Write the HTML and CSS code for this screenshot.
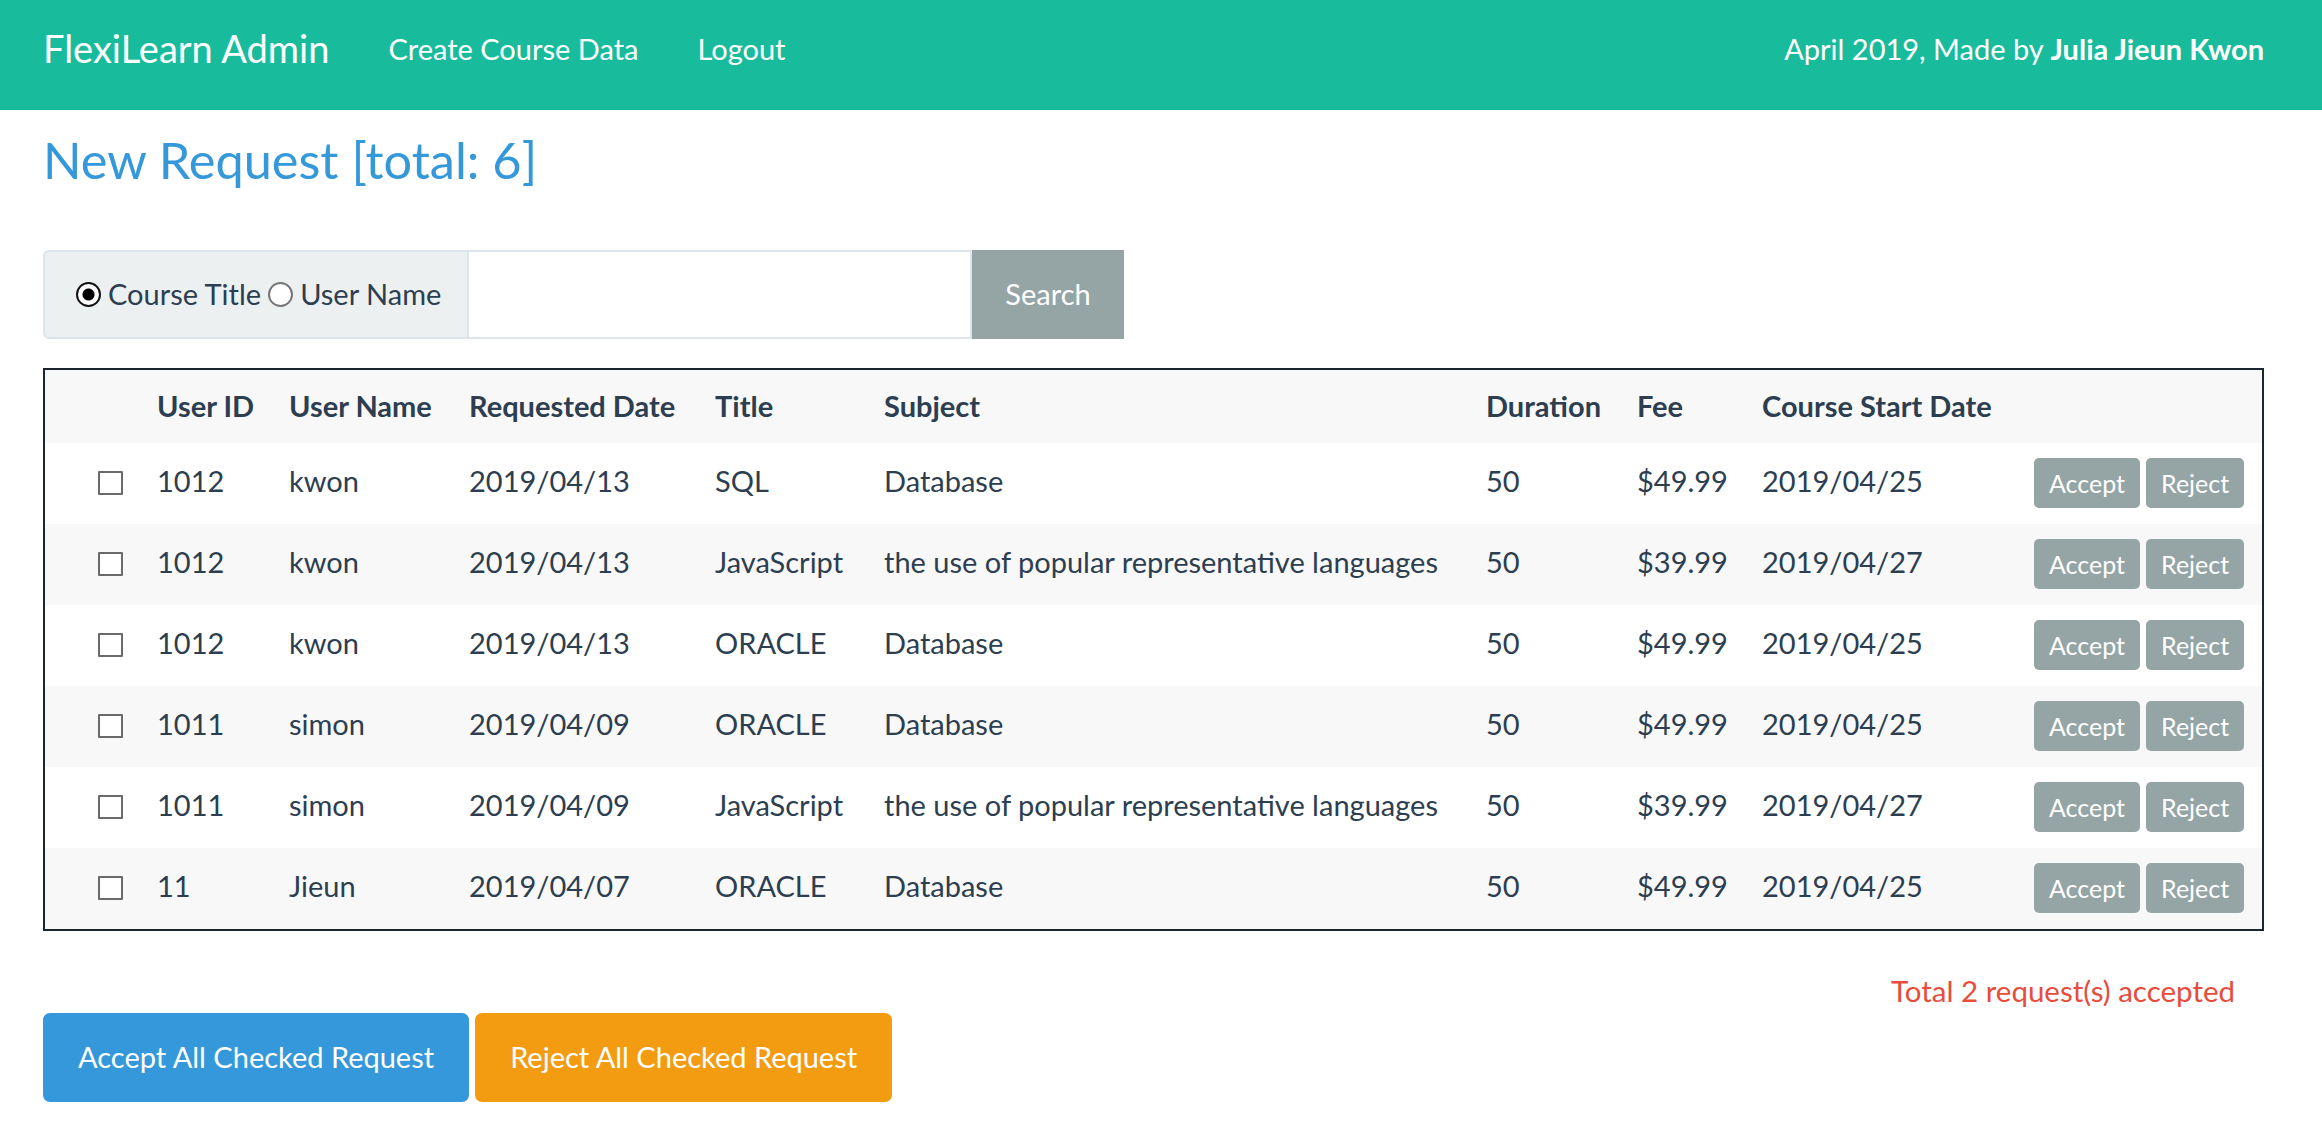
FILE: index.html
```html
<!DOCTYPE html>
<html lang="en">
<head>
<meta charset="utf-8">
<title>FlexiLearn Admin</title>
<link rel="stylesheet" href="styles.css">
</head>
<body>
<nav class="navbar">
  <a class="brand" href="#">FlexiLearn Admin</a>
  <a class="nav-link" href="#">Create Course Data</a>
  <a class="nav-link" href="#">Logout</a>
  <span class="nav-text">April 2019, Made by <b>Julia Jieun Kwon</b></span>
</nav>
<main class="page">
  <h3 class="title">New Request [total: 6]</h3>
  <form class="search-group">
    <div class="radio-box">
      <input type="radio" name="by" class="radio" checked><span class="radio-label">Course Title</span>
      <input type="radio" name="by" class="radio"><span class="radio-label">User Name</span>
    </div>
    <input type="text" class="search-input">
    <button type="button" class="search-btn">Search</button>
  </form>

  <table class="req-table">
    <colgroup>
      <col class="c0"><col class="c1"><col class="c2"><col class="c3"><col class="c4">
      <col class="c5"><col class="c6"><col class="c7"><col class="c8"><col class="c9">
    </colgroup>
    <tbody>
      <tr class="head-row">
        <th></th><th>User ID</th><th>User Name</th><th>Requested Date</th><th>Title</th>
        <th>Subject</th><th>Duration</th><th>Fee</th><th>Course Start Date</th><th></th>
      </tr>
      <tr>
        <td class="chk"><input type="checkbox" class="box"></td><td>1012</td><td>kwon</td><td>2019/04/13</td><td>SQL</td>
        <td>Database</td><td>50</td><td>$49.99</td><td>2019/04/25</td>
        <td class="acts"><button class="sm-btn">Accept</button><button class="sm-btn">Reject</button></td>
      </tr>
      <tr>
        <td class="chk"><input type="checkbox" class="box"></td><td>1012</td><td>kwon</td><td>2019/04/13</td><td>JavaScript</td>
        <td>the use of popular representative languages</td><td>50</td><td>$39.99</td><td>2019/04/27</td>
        <td class="acts"><button class="sm-btn">Accept</button><button class="sm-btn">Reject</button></td>
      </tr>
      <tr>
        <td class="chk"><input type="checkbox" class="box"></td><td>1012</td><td>kwon</td><td>2019/04/13</td><td>ORACLE</td>
        <td>Database</td><td>50</td><td>$49.99</td><td>2019/04/25</td>
        <td class="acts"><button class="sm-btn">Accept</button><button class="sm-btn">Reject</button></td>
      </tr>
      <tr>
        <td class="chk"><input type="checkbox" class="box"></td><td>1011</td><td>simon</td><td>2019/04/09</td><td>ORACLE</td>
        <td>Database</td><td>50</td><td>$49.99</td><td>2019/04/25</td>
        <td class="acts"><button class="sm-btn">Accept</button><button class="sm-btn">Reject</button></td>
      </tr>
      <tr>
        <td class="chk"><input type="checkbox" class="box"></td><td>1011</td><td>simon</td><td>2019/04/09</td><td>JavaScript</td>
        <td>the use of popular representative languages</td><td>50</td><td>$39.99</td><td>2019/04/27</td>
        <td class="acts"><button class="sm-btn">Accept</button><button class="sm-btn">Reject</button></td>
      </tr>
      <tr>
        <td class="chk"><input type="checkbox" class="box"></td><td>11</td><td>Jieun</td><td>2019/04/07</td><td>ORACLE</td>
        <td>Database</td><td>50</td><td>$49.99</td><td>2019/04/25</td>
        <td class="acts"><button class="sm-btn">Accept</button><button class="sm-btn">Reject</button></td>
      </tr>
    </tbody>
  </table>

  <p class="msg">Total 2 request(s) accepted</p>

  <div class="bulk">
    <button type="button" class="big-btn accept-all">Accept All Checked Request</button>
    <button type="button" class="big-btn reject-all">Reject All Checked Request</button>
  </div>
</main>
</body>
</html>
```

FILE: styles.css
```css
html, body {
  margin: 0;
  padding: 0;
  background: #ffffff;
}
body {
  font-family: Lato, "Open Sans", "Liberation Sans", sans-serif;
  font-size: 29px;
  line-height: 1.5;
  color: #2c3e50;
}

/* navbar */
.navbar {
  height: 110px;
  box-sizing: border-box;
  padding: 0 58px 12px 43px;
  background: #18bc9c;
  display: flex;
  align-items: center;
}
.navbar a {
  color: #ffffff;
  text-decoration: none;
}
.brand {
  font-size: 38px;
  line-height: 1.2;
  margin-right: 59px;
}
.nav-link {
  font-size: 29px;
  line-height: 1.2;
  margin-right: 59px;
}
.nav-text {
  margin-left: auto;
  color: #ffffff;
  font-size: 29px;
  line-height: 1.2;
}
.nav-text b {
  font-weight: 700;
}

/* page */
.page {
  padding: 0 58px 0 43px;
}
.title {
  margin: 20px 0 0 0;
  font-size: 50.5px;
  font-weight: 400;
  line-height: 1.2;
  color: #3498db;
}

/* search group */
.search-group {
  margin-top: 59px;
  display: flex;
  height: 89px;
}
.radio-box {
  box-sizing: border-box;
  height: 89px;
  width: 426px;
  display: flex;
  align-items: center;
  padding: 0 0 0 31px;
  background: #ecf0f1;
  border: 2px solid #dce4ec;
  border-radius: 6px 0 0 6px;
  color: #2c3e50;
}
.radio {
  appearance: none;
  -webkit-appearance: none;
  width: 25px;
  height: 25px;
  margin: 0 7px 0 0;
  box-sizing: border-box;
  border: 2px solid #767676;
  border-radius: 50%;
  background: #ffffff;
  flex: none;
}
.radio:checked {
  border: 2.5px solid #111111;
  background: radial-gradient(circle, #000000 0 5.5px, #ffffff 6.5px);
}
.radio-label {
  margin-right: 7px;
  line-height: 1.2;
}
.search-input {
  box-sizing: border-box;
  width: 503px;
  height: 89px;
  margin: 0;
  border: 2px solid #dce4ec;
  border-left: 0;
  background: #ffffff;
  font: inherit;
  padding: 0 20px;
  outline: none;
}
.search-btn {
  box-sizing: border-box;
  width: 152px;
  height: 89px;
  margin: 0;
  border: 0;
  background: #95a5a6;
  color: #ffffff;
  font: inherit;
  line-height: 1.2;
}

/* table */
.req-table {
  margin-top: 29px;
  width: 100%;
  table-layout: fixed;
  border-collapse: separate;
  border-spacing: 0;
  border: 2px solid #1c2632;
}
.c0 { width: 95px; }
.c1 { width: 132px; }
.c2 { width: 180px; }
.c3 { width: 246px; }
.c4 { width: 169px; }
.c5 { width: 602px; }
.c6 { width: 151px; }
.c7 { width: 125px; }
.c8 { width: 272px; }
.c9 { width: 245px; }

.req-table th,
.req-table td {
  padding: 0 17px;
  text-align: left;
  vertical-align: middle;
  white-space: nowrap;
  color: #2c3e50;
}
.req-table th {
  font-weight: 700;
  height: 73px;
}
.req-table td {
  height: 81px;
  padding-bottom: 4px;
  box-sizing: border-box;
}
.req-table tr:nth-child(odd) {
  background: #f8f8f8;
}
.req-table tr:nth-child(even) {
  background: #ffffff;
}
.req-table td.chk {
  padding: 0 0 0 53px;
}
.box {
  appearance: none;
  -webkit-appearance: none;
  display: block;
  width: 25px;
  height: 24px;
  margin: 0;
  box-sizing: border-box;
  border: 2px solid #6a6a6a;
  border-radius: 1px;
  background: #ffffff;
}
.req-table td.acts {
  padding: 0 20px 0 17px;
  text-align: right;
}
.sm-btn {
  height: 50px;
  box-sizing: border-box;
  padding: 0 15px;
  margin: 0 0 0 6px;
  border: 0;
  border-radius: 5px;
  background: #95a5a6;
  color: #ffffff;
  font-family: inherit;
  font-size: 25px;
  line-height: 1.2;
  vertical-align: middle;
}
.sm-btn:first-child {
  margin-left: 0;
}

/* footer area */
.msg {
  margin: 42px 0 0 0;
  padding-right: 29px;
  text-align: right;
  color: #e74c3c;
  font-size: 29.5px;
  line-height: 1.2;
}
.bulk {
  margin-top: 5px;
  display: flex;
  gap: 6px;
}
.big-btn {
  height: 89px;
  box-sizing: border-box;
  padding: 0 35px;
  border: 0;
  border-radius: 7px;
  color: #ffffff;
  font-family: inherit;
  font-size: 29px;
  line-height: 1.2;
}
.accept-all {
  background: #3498db;
}
.reject-all {
  background: #f39c12;
}
```
